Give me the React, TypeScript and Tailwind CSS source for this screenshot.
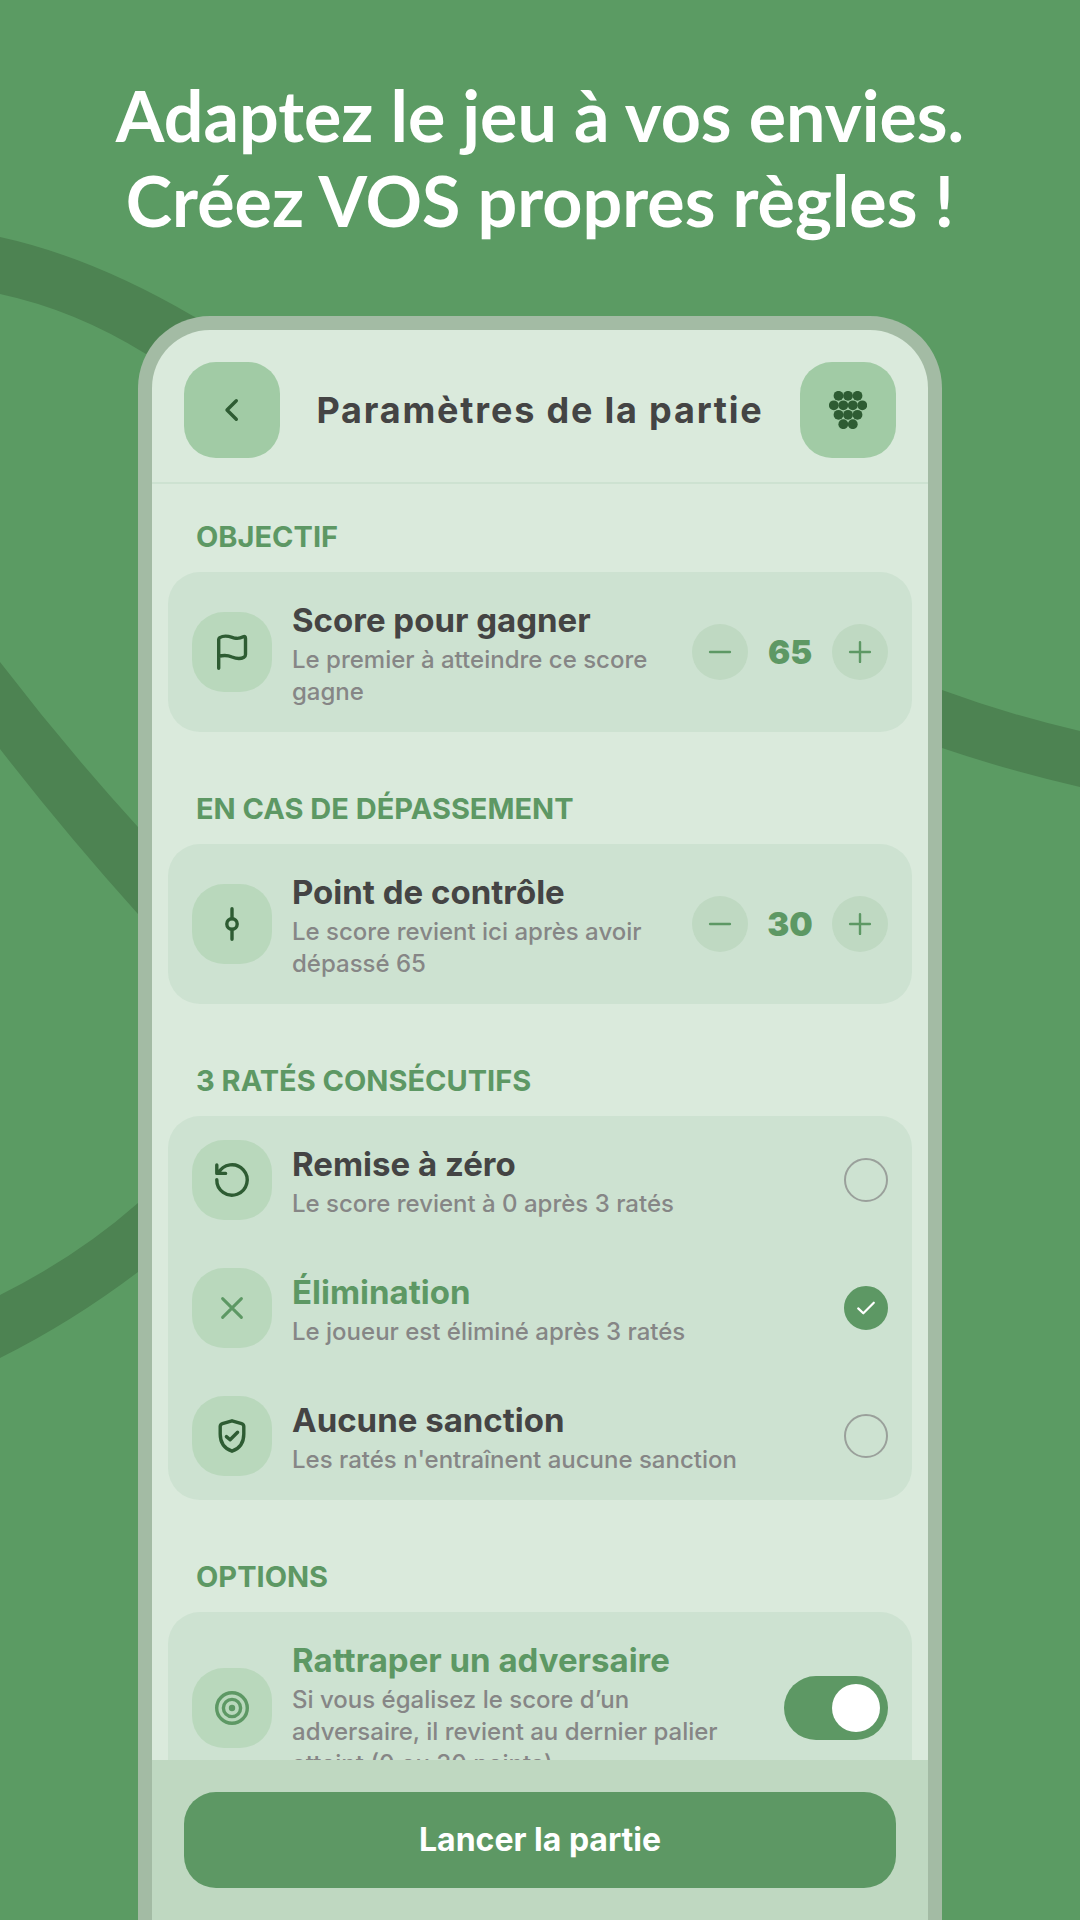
import { useState, type ReactNode } from "react";

function Icon({ children, className = "" }: { children: ReactNode; className?: string }) {
  return (
    <svg
      aria-hidden="true"
      viewBox="-20 -20 40 40"
      className={`size-10 shrink-0 fill-none stroke-current stroke-[3.4] ${className}`}
      strokeLinecap="round"
      strokeLinejoin="round"
    >
      {children}
    </svg>
  );
}

const FlagIcon = () => (
  <Icon>
    <path d="M-13.3 16.3V-12.5Q-13.3-13.7-12.3-14.4C-5.5-18.3 0-14 4-13.7C7-13.4 9-14 11.2-15.2Q13.5-16.2 13.5-13.6V2.5Q13.5 4.4 12 5.2C8 7.5 4 6.6 0 5C-4 3.2-8 2.8-13.3 4.4" />
  </Icon>
);
const PointIcon = () => (
  <Icon>
    <circle r="5.2" />
    <path d="M0-15.2V-5.4M0 5.4V15.2" />
  </Icon>
);
const ResetIcon = () => (
  <Icon>
    <path d="M-15.2-.4A15.2 15.2 0 1 0-13.6-6.8M-15.2-15V-6.6H-6.4" />
  </Icon>
);
const CrossIcon = () => (
  <Icon>
    <path d="M-9.4-9.4 9.4 9.4M9.4-9.4-9.4 9.4" className="stroke-3" />
  </Icon>
);
const ShieldIcon = () => (
  <Icon>
    <path d="M0-15.2 9.6-12.3Q11.8-11.6 11.8-9.5V-2C11.8 7.5 6.8 12.8 0 15.2C-6.8 12.8-11.8 7.5-11.8-2V-9.5Q-11.8-11.6-9.6-12.3ZM-5.6 .6-1.9 3.8 5.6-3.8" />
  </Icon>
);
const TargetIcon = () => (
  <Icon>
    <circle r="15.3" />
    <circle r="8.6" />
    <circle r="3.2" className="fill-current stroke-none" />
  </Icon>
);

const grapes = [
  [9.5, 4.8], [19, 4.8], [28.5, 4.8],
  [4.8, 14.3], [14.3, 14.3], [23.8, 14.3], [33.3, 14.3],
  [9.5, 23.8], [19, 23.8], [28.5, 23.8],
  [14.3, 33.2], [23.8, 33.2],
];

function Section({ title, children }: { title: string; children: ReactNode }) {
  return (
    <section className="pb-6">
      <h3 className="px-7 pt-8 pb-[14px] text-[29px] leading-[42px] font-bold text-[#5d9864]">{title}</h3>
      <div className="rounded-[32px] bg-[#cde2d1]">{children}</div>
    </section>
  );
}

function RowBody({ icon, title, text, active = false }: { icon: ReactNode; title: string; text: string; active?: boolean }) {
  return (
    <>
      <span className={`flex size-20 shrink-0 items-center justify-center rounded-[32px] bg-[#b9d8bc] ${active ? "text-[#5d9864]" : "text-[#2e5c33]"}`}>
        {icon}
      </span>
      <span className="min-w-0 flex-1">
        <span className={`block text-[33px] leading-[48px] font-bold ${active ? "text-[#5d9864]" : "text-[#444444]"}`}>{title}</span>
        <span className="block text-2xl leading-8 font-medium text-[#868686]">{text}</span>
      </span>
    </>
  );
}

function Stepper({ label, value, onChange }: { label: string; value: number; onChange: (v: number) => void }) {
  const button = "flex size-14 items-center justify-center rounded-full bg-[#bfd9c2]";
  return (
    <div className="ml-3 flex shrink-0 items-center text-[#5d9864]" role="group" aria-label={label}>
      <button type="button" aria-label="Diminuer" className={button} onClick={() => onChange(value - 5)}>
        <Icon><path d="M-9.9 0H9.9" className="stroke-[2.4]" /></Icon>
      </button>
      <output className="w-[84px] text-center text-[33px] leading-10 font-black">{value}</output>
      <button type="button" aria-label="Augmenter" className={button} onClick={() => onChange(value + 5)}>
        <Icon><path d="M-9.9 0H9.9M0-9.9V9.9" className="stroke-[2.4]" /></Icon>
      </button>
    </div>
  );
}

const penalties = [
  { id: "reset", icon: <ResetIcon />, title: "Remise à zéro", text: "Le score revient à 0 après 3 ratés" },
  { id: "out", icon: <CrossIcon />, title: "Élimination", text: "Le joueur est éliminé après 3 ratés" },
  { id: "none", icon: <ShieldIcon />, title: "Aucune sanction", text: "Les ratés n'entraînent aucune sanction" },
];

export default function App() {
  const [goal, setGoal] = useState(65);
  const [checkpoint, setCheckpoint] = useState(30);
  const [penalty, setPenalty] = useState("out");
  const [catchUp, setCatchUp] = useState(true);

  return (
    <div className="relative isolate flex h-screen flex-col overflow-hidden bg-[#5b9b63] font-['Inter',sans-serif]">
      <svg aria-hidden="true" viewBox="0 0 1080 1920" preserveAspectRatio="none" className="absolute inset-0 -z-10 size-full fill-[#4d8352]">
        <path d="M0 237Q92 257 193 316L260 350 200 384 146 354Q75 310 0 294Z" />
        <path d="M0 662Q66 748 138 827L200 890V980L138 914Q66 834 0 749Z" />
        <path d="M0 1295Q78 1256 138 1203L200 1150V1225L138 1272Q72 1322 0 1358Z" />
        <path d="M900 674 942 690Q1010 715 1080 731V787Q1010 771 942 748L900 732Z" />
      </svg>

      <h1 className="px-8 pt-[73px] pb-[73px] text-center font-['Lato',sans-serif] text-[70px] leading-[85px] font-bold text-white">
        Adaptez le jeu à vos envies.
        <br />
        Créez VOS propres règles !
      </h1>

      <main className="mx-auto flex min-h-0 w-full max-w-[804px] flex-1 flex-col overflow-hidden rounded-t-[72px] border-14 border-b-0 border-[#a3bba4] bg-[#daeadc]">
        <header className="flex items-center justify-between border-b-2 border-[#cde2d1] px-8 pt-8 pb-6">
          <button type="button" aria-label="Retour" className="flex size-24 items-center justify-center rounded-[32px] bg-[#a1cba5] text-[#2e5c33]">
            <Icon><path d="M4.3-9.2-5 0 4.3 9.2" /></Icon>
          </button>
          <h2 className="text-4xl font-bold tracking-wider text-[#444444]">Paramètres de la partie</h2>
          <button type="button" aria-label="Mölkky" className="flex size-24 items-center justify-center rounded-[32px] bg-[#a1cba5]">
            <svg aria-hidden="true" viewBox="0 0 38 38" className="size-[38px] fill-[#2e5c33]">
              {grapes.map(([x, y]) => (
                <circle key={`${x}-${y}`} cx={x} cy={y} r="4.9" />
              ))}
            </svg>
          </button>
        </header>

        <div className="min-h-0 flex-1 overflow-y-auto px-4 [scrollbar-width:none]">
          <Section title="OBJECTIF">
            <div className="flex items-center gap-5 p-6">
              <RowBody icon={<FlagIcon />} title="Score pour gagner" text="Le premier à atteindre ce score gagne" />
              <Stepper label="Score pour gagner" value={goal} onChange={setGoal} />
            </div>
          </Section>

          <Section title="EN CAS DE DÉPASSEMENT">
            <div className="flex items-center gap-5 p-6">
              <RowBody icon={<PointIcon />} title="Point de contrôle" text={`Le score revient ici après avoir dépassé ${goal}`} />
              <Stepper label="Point de contrôle" value={checkpoint} onChange={setCheckpoint} />
            </div>
          </Section>

          <Section title="3 RATÉS CONSÉCUTIFS">
            {penalties.map((p) => (
              <label key={p.id} className="flex cursor-pointer items-center gap-5 p-6">
                <RowBody icon={p.icon} title={p.title} text={p.text} active={penalty === p.id} />
                <span className="grid shrink-0 place-items-center">
                  <input
                    type="radio"
                    name="penalty"
                    checked={penalty === p.id}
                    onChange={() => setPenalty(p.id)}
                    className="col-start-1 row-start-1 size-11 appearance-none rounded-full border-2 border-[#9aa09b] checked:border-[#5d9864] checked:bg-[#5d9864]"
                  />
                  {penalty === p.id && (
                    <Icon className="pointer-events-none z-10 col-start-1 row-start-1 text-white">
                      <path d="M-7.8 .4-2.7 5.3 7.8-5.3" className="stroke-[2.2]" />
                    </Icon>
                  )}
                </span>
              </label>
            ))}
          </Section>

          <Section title="OPTIONS">
            <label className="flex cursor-pointer items-center gap-5 p-6">
              <RowBody
                icon={<TargetIcon />}
                title="Rattraper un adversaire"
                text={`Si vous égalisez le score d’un adversaire, il revient au dernier palier atteint (0 ou ${checkpoint} points).`}
                active={catchUp}
              />
              <span className="ml-6 grid shrink-0 items-center">
                <input
                  type="checkbox"
                  role="switch"
                  checked={catchUp}
                  onChange={(e) => setCatchUp(e.target.checked)}
                  className="peer col-start-1 row-start-1 h-16 w-26 appearance-none rounded-full bg-[#9aa69c] checked:bg-[#5d9864]"
                />
                <span className="pointer-events-none z-10 col-start-1 row-start-1 ml-2 size-12 rounded-full bg-white peer-checked:ml-12" />
              </span>
            </label>
          </Section>
        </div>

        <footer className="bg-[#bfd8c1] p-8">
          <button type="button" className="h-24 w-full rounded-[32px] bg-[#5d9864] text-[32px] font-bold text-white">
            Lancer la partie
          </button>
        </footer>
      </main>
    </div>
  );
}
